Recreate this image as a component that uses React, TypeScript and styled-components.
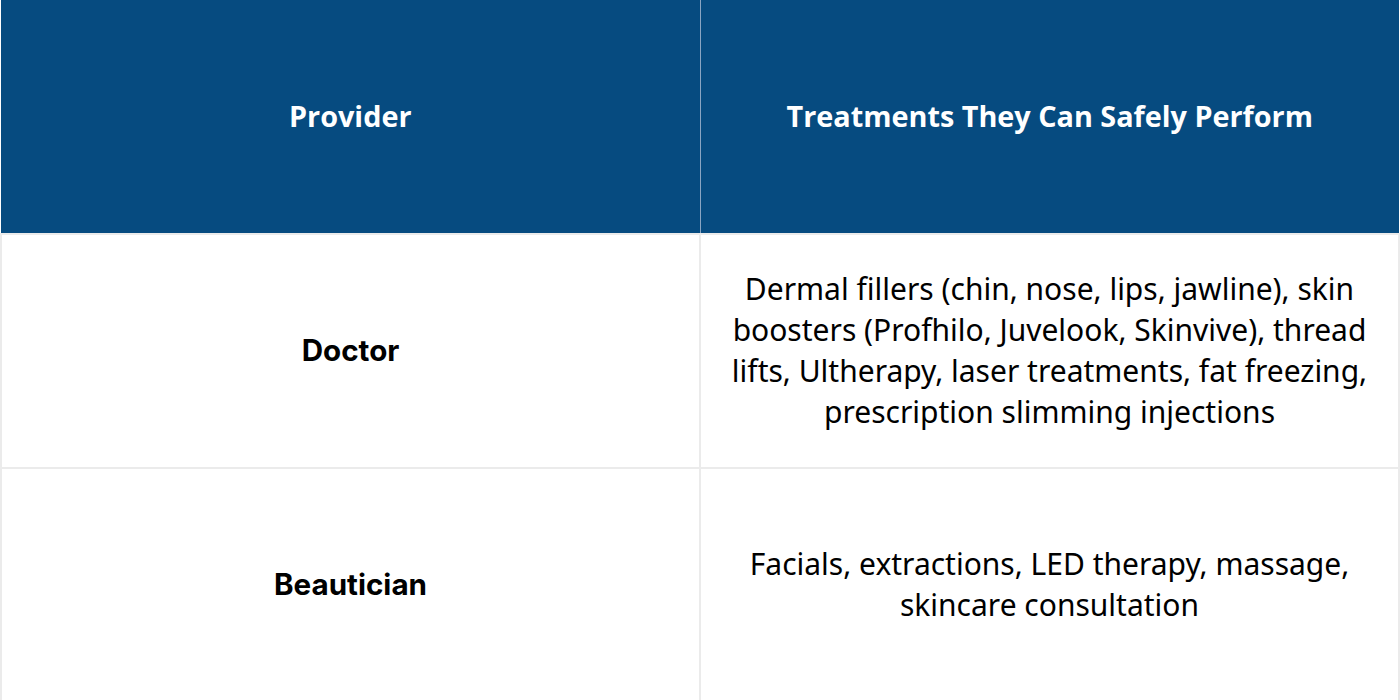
import styled, { createGlobalStyle } from "styled-components";

const GlobalStyle = createGlobalStyle`
    html, body {
        margin: 0;
        padding: 0;
        background: #fff;
    }
`

const rows = [
    {
        provider: "Doctor",
        treatments: "Dermal fillers (chin, nose, lips, jawline), skin boosters (Profhilo, Juvelook, Skinvive), thread lifts, Ultherapy, laser treatments, fat freezing, prescription slimming injections",
    },
    {
        provider: "Beautician",
        treatments: "Facials, extractions, LED therapy, massage, skincare consultation",
    },
]

const Table = styled.table`
    width: 1400px;
    height: 700px;
    border-collapse: collapse;
    table-layout: fixed;
    font-family: "Open Sans", "Noto Sans", sans-serif;
`

const HeadCell = styled.th`
    height: 231px;
    background-color: #064b80;
    color: #fff;
    font-size: 28.8px;
    font-weight: 700;
    text-align: center;
    padding: 0 20px 2px;
    border: 1px solid #8aa5c2;
    border-top: none;
    &:first-child { border-left: none; }
    &:last-child { border-right: none; }
`

const Cell = styled.td<{ $bold?: boolean }>`
    height: 230px;
    padding: 0 22px 2px;
    text-align: center;
    vertical-align: middle;
    color: #000;
    font-size: ${p => p.$bold ? "29.6px" : "30px"};
    font-weight: ${p => p.$bold ? 700 : 400};
    font-family: ${p => p.$bold ? `Inter, "Open Sans", sans-serif` : `"Noto Sans", "Open Sans", sans-serif`};
    line-height: 41px;
    border: 2px solid #ebebeb;
`

export default function App() {
    return (
        <>
            <GlobalStyle />
            <Table>
                <thead>
                    <tr>
                        <HeadCell>Provider</HeadCell>
                        <HeadCell>Treatments They Can Safely Perform</HeadCell>
                    </tr>
                </thead>
                <tbody>
                    {rows.map(r => (
                        <tr key={r.provider}>
                            <Cell $bold>{r.provider}</Cell>
                            <Cell>{r.treatments}</Cell>
                        </tr>
                    ))}
                </tbody>
            </Table>
        </>
    )
}
